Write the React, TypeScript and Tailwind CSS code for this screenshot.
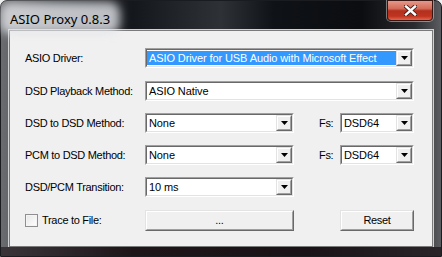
import React from "react";

const uiFont = "font-['Liberation_Sans',Arial,sans-serif] text-[11px] tracking-[-0.3px] text-black";
const valueFont = "font-['Liberation_Sans',Arial,sans-serif] text-[11px] tracking-[-0.1px] text-black";

function ArrowButton() {
  return (
    <div className="w-[16px] h-full shrink-0 border-t border-l border-t-[#e3e3e3] border-l-[#e3e3e3] border-b border-r border-b-[#696969] border-r-[#696969]">
      <div className="w-full h-full flex items-center justify-center bg-[#f0f0f0] border-t border-l border-t-white border-l-white border-b border-r border-b-[#a0a0a0] border-r-[#a0a0a0]">
        <svg width="7" height="4" viewBox="0 0 7 4">
          <path d="M0 0h7L3.5 4z" fill="#000" />
        </svg>
      </div>
    </div>
  );
}

function Combo({ value, w, selected }: { value: string; w: string; selected?: boolean }) {
  return (
    <div className={`${w} h-[20px] shrink-0 border-t border-l border-t-[#a0a0a0] border-l-[#a0a0a0] border-b border-r border-b-white border-r-white`}>
      <div className="h-full flex bg-white border-t border-l border-t-[#696969] border-l-[#696969] border-b border-r border-b-[#e3e3e3] border-r-[#e3e3e3]">
        <div
          className={`flex-1 flex items-center pl-[2px] my-px whitespace-nowrap overflow-hidden ${valueFont} ${
            selected ? "bg-[#3399ff] !text-white" : ""
          }`}
        >
          {value}
        </div>
        <ArrowButton />
      </div>
    </div>
  );
}

function Button({ label, w }: { label: string; w: string }) {
  return (
    <div className={`${w} h-[21px] shrink-0 border-t border-l border-t-[#e3e3e3] border-l-[#e3e3e3] border-b border-r border-b-[#696969] border-r-[#696969]`}>
      <div className={`h-full flex items-center justify-center bg-[#f0f0f0] border-t border-l border-t-white border-l-white border-b border-r border-b-[#a0a0a0] border-r-[#a0a0a0] ${uiFont}`}>
        {label}
      </div>
    </div>
  );
}

function Label({ text }: { text: string }) {
  return <div className={`w-[120px] shrink-0 ${uiFont}`}>{text}</div>;
}

function CloseIcon() {
  return (
    <svg width="13" height="11" viewBox="0 0 13 11">
      <path d="M2 1.5l9 8M11 1.5l-9 8" stroke="#3a2020" strokeWidth="4.2" strokeLinecap="square" />
      <path d="M2 1.5l9 8M11 1.5l-9 8" stroke="#fff" strokeWidth="2.4" strokeLinecap="square" />
    </svg>
  );
}

export default function App() {
  return (
    <div className="w-[442px] h-[257px] overflow-hidden bg-[#f0f0f0]">
      <div className="w-[442px] h-[257px] flex flex-col rounded-t-[7px] border border-[#1a1c20] bg-[linear-gradient(90deg,#6a6c70_0%,#3a3d42_12%,#14171c_30%,#2e3136_50%,#0f1216_62%,#0b0d11_82%,#2a2c30_94%,#5a5c60_100%)]">
        {/* title bar */}
        <div className="h-[29px] flex items-start justify-between">
          <div className="relative mt-[5px] ml-[9px]">
            <div className="absolute -inset-x-[10px] -inset-y-[4px] rounded-[10px] bg-[#e4e6ea] opacity-80 blur-[5px]" />
            <span className="relative font-['Noto_Sans',sans-serif] text-[13px] leading-[18px] text-black">
              ASIO Proxy 0.8.3
            </span>
          </div>
          <div className="mr-[8px] -mt-px w-[46px] h-[21px] rounded-b-[4px] border border-[#3a1612] shadow-[0_0_0_1px_rgba(220,220,220,0.5)] flex items-center justify-center bg-[linear-gradient(180deg,#e3998a_0%,#d66a58_40%,#b2301d_52%,#c0341f_80%,#e2664c_100%)]">
            <CloseIcon />
          </div>
        </div>

        {/* client area */}
        <div className="mx-[8px] h-[217px] bg-[#f0f0f0] border border-[#7a7a7a] shadow-[0_0_0_1px_#cfd1d4] flex flex-col pl-[15px] pr-[18px] pt-[17px]">
          <div className="h-[33px] flex items-start">
            <div className="h-[20px] flex items-center"><Label text="ASIO Driver:" /></div>
            <Combo value="ASIO Driver for USB Audio with Microsoft Effect" w="w-[269px]" selected />
          </div>
          <div className="h-[32px] flex items-start">
            <div className="h-[20px] flex items-center"><Label text="DSD Playback Method:" /></div>
            <Combo value="ASIO Native" w="w-[269px]" />
          </div>
          <div className="h-[32px] flex items-start">
            <div className="h-[20px] flex items-center"><Label text="DSD to DSD Method:" /></div>
            <Combo value="None" w="w-[149px]" />
            <div className={`ml-[25px] w-[21px] h-[20px] flex items-center ${uiFont}`}>Fs:</div>
            <Combo value="DSD64" w="w-[74px]" />
          </div>
          <div className="h-[32px] flex items-start">
            <div className="h-[20px] flex items-center"><Label text="PCM to DSD Method:" /></div>
            <Combo value="None" w="w-[149px]" />
            <div className={`ml-[25px] w-[21px] h-[20px] flex items-center ${uiFont}`}>Fs:</div>
            <Combo value="DSD64" w="w-[74px]" />
          </div>
          <div className="h-[33px] flex items-start">
            <div className="h-[20px] flex items-center"><Label text="DSD/PCM Transition:" /></div>
            <Combo value="10 ms" w="w-[149px]" />
          </div>
          <div className="h-[21px] flex items-center">
            <div className="w-[120px] shrink-0 flex items-center gap-[4px]">
              <div className="w-[13px] h-[13px] border border-[#8f8f8f] bg-[linear-gradient(135deg,#e6e6e6,#ffffff)] shadow-[inset_0_0_0_1px_#f4f4f4]" />
              <span className={uiFont}>Trace to File:</span>
            </div>
            <Button label="..." w="w-[149px]" />
            <div className="ml-[46px]">
              <Button label="Reset" w="w-[74px]" />
            </div>
          </div>
        </div>
        <div className="flex-1 bg-[linear-gradient(90deg,#3a3438,#1e1519_30%,#1a1216_70%,#2a2428)]" />
      </div>
    </div>
  );
}
